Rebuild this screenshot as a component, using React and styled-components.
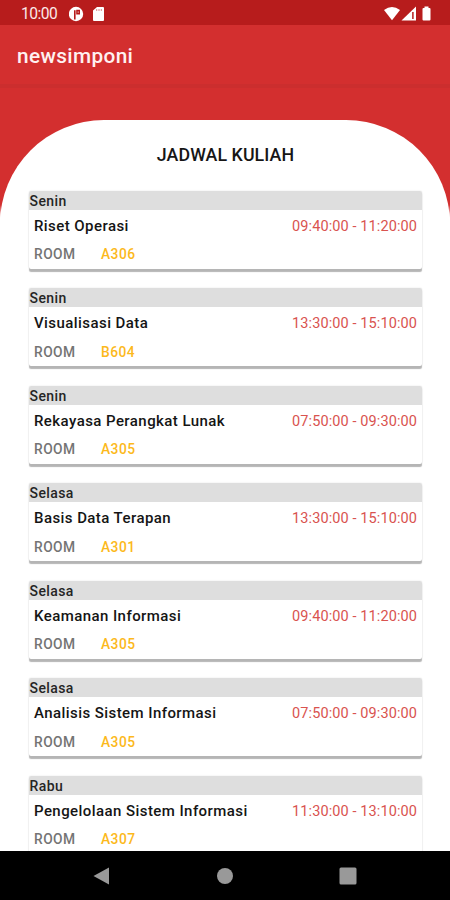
import React from "react";
import styled, { createGlobalStyle } from "styled-components";

const GlobalStyle = createGlobalStyle`
  * { box-sizing: border-box; }
  body { margin: 0; background: #fff; }
`;

const Screen = styled.div`
  width: 450px;
  height: 900px;
  display: flex;
  flex-direction: column;
  overflow: hidden;
  font-family: Roboto, sans-serif;
  font-weight: 500;
  background: #fff;
`;

const StatusBar = styled.header`
  flex: none;
  height: 25px;
  display: flex;
  align-items: center;
  padding: 2px 18px 0 21px;
  color: #fbe9e9;
  background: #b71c1c;
`;

const Clock = styled.span`
  width: 48px;
  padding-top: 1px;
  font-size: 15.6px;
  font-weight: 400;
  line-height: 23px;
  letter-spacing: -0.5px;
  white-space: nowrap;
`;

const StatusIcons = styled.svg`
  display: block;
  flex: none;
  margin-left: ${(p) => (p.$end ? "auto" : 0)};
`;

const AppBar = styled.div`
  flex: none;
  height: 63px;
  padding: 0 17px;
  display: flex;
  align-items: center;
  color: #fff1f1;
  background: #d32f2f;
  border-bottom: 4px solid #cb2e2e;
`;

const AppTitle = styled.h1`
  margin: 2px 0 0;
  font-size: 20.8px;
  font-weight: 500;
  line-height: 26px;
  letter-spacing: 0.36px;
`;

const Content = styled.main`
  flex: 1;
  min-height: 0;
  padding-top: 32px;
  overflow: hidden;
  background: linear-gradient(#d32f2f 117px, #fff 130px);
`;

const Sheet = styled.section`
  height: 100%;
  padding: 24px 28px 0 29px;
  background: #fff;
  border-radius: 104px 104px 0 0;
`;

const Heading = styled.h2`
  margin: 0 0 25.5px;
  font-size: 17.8px;
  font-weight: 500;
  line-height: 21px;
  letter-spacing: 0.08px;
  text-align: center;
  color: #161616;
`;

const ScheduleList = styled.div`
  display: flex;
  flex-direction: column;
  gap: 19.5px;
`;

const Card = styled.article`
  flex: none;
  height: 78px;
  border-radius: 2px;
  background: #fff;
  box-shadow: 0 2.5px 1px #b5b5b5, 0 0 1.5px #d8d8d8;
`;

const Day = styled.div`
  height: 19px;
  padding-left: 0.5px;
  font-size: 14px;
  line-height: 21px;
  letter-spacing: 0.4px;
  color: #252525;
  background: #dedede;
  border-radius: 2px 2px 0 0;
`;

const CourseRow = styled.div`
  display: flex;
  justify-content: space-between;
  padding: 5.4px 5px 0;
  font-size: 15px;
  line-height: 22px;
  white-space: nowrap;
`;

const Course = styled.span`
  color: #151515;
  letter-spacing: 0.43px;
`;

const Time = styled.time`
  padding-top: 1px;
  margin-bottom: -1px;
  font-size: 14.5px;
  font-weight: 400;
  letter-spacing: 0.1px;
  color: #d9534f;
`;

const RoomRow = styled.div`
  display: flex;
  padding: 7.6px 5px 0;
  font-size: 13.8px;
  line-height: 20px;
  letter-spacing: 0.45px;
`;

const RoomLabel = styled.span`
  width: 67px;
  color: #747474;
`;

const RoomCode = styled.span`
  color: #fcb91c;
`;

const NavigationBar = styled.nav`
  flex: none;
  height: 49px;
  display: flex;
  justify-content: space-between;
  align-items: center;
  padding: 0 93px;
  background: #000;
`;

const NavButton = styled.button`
  width: 18px;
  height: 18px;
  padding: 0;
  border: 0;
  background: transparent;
  color: #999;
  svg { display: block; }
`;

const classes = [
  ["Senin", "Riset Operasi", "09:40:00 - 11:20:00", "A306"],
  ["Senin", "Visualisasi Data", "13:30:00 - 15:10:00", "B604"],
  ["Senin", "Rekayasa Perangkat Lunak", "07:50:00 - 09:30:00", "A305"],
  ["Selasa", "Basis Data Terapan", "13:30:00 - 15:10:00", "A301"],
  ["Selasa", "Keamanan Informasi", "09:40:00 - 11:20:00", "A305"],
  ["Selasa", "Analisis Sistem Informasi", "07:50:00 - 09:30:00", "A305"],
  ["Rabu", "Pengelolaan Sistem Informasi", "11:30:00 - 13:10:00", "A307"],
];

export default function App() {
  return (
    <Screen>
      <GlobalStyle />
      <StatusBar>
        <Clock>10:00</Clock>
        <StatusIcons width="38" height="18" viewBox="0 0 38 18" fill="#fff">
          <circle cx="7" cy="9" r="7.2" />
          <path d="M5.8 14.5V5.2M8 5.5h2.2v3.2H8z" fill="none" stroke="#b71c1c" strokeWidth="1.6" />
          <path d="M28 2h6q1 0 1 1v12q0 1-1 1h-9q-1 0-1-1V5.5z" />
          <path d="M27.7 4v2M30 4v2M32.3 4v2" stroke="#d98989" strokeWidth="1" />
        </StatusIcons>
        <StatusIcons $end width="48" height="18" viewBox="0 0 48 18" fill="#fff">
          <path d="M0 5Q8 -1 16 5L8 15.2Z" />
          <path d="M17.5 15.5 32 1.5v14z" />
          <path d="M28.9 7v7" stroke="#b71c1c" strokeWidth="1.5" />
          <path d="M40.5 1.5h4v1.5h1q1 0 1 1v10.5q0 1-1 1h-6q-1 0-1-1V4q0-1 1-1h1z" />
        </StatusIcons>
      </StatusBar>
      <AppBar><AppTitle>newsimponi</AppTitle></AppBar>
      <Content>
        <Sheet>
          <Heading>JADWAL KULIAH</Heading>
          <ScheduleList>
            {classes.map(([day, course, time, room]) => (
              <Card key={course}>
                <Day>{day}</Day>
                <CourseRow>
                  <Course>{course}</Course>
                  <Time>{time}</Time>
                </CourseRow>
                <RoomRow>
                  <RoomLabel>ROOM</RoomLabel>
                  <RoomCode>{room}</RoomCode>
                </RoomRow>
              </Card>
            ))}
          </ScheduleList>
        </Sheet>
      </Content>
      <NavigationBar>
        <NavButton aria-label="Back">
          <svg width="18" height="18" fill="currentColor"><path d="M.5 9 16 .5v17z" /></svg>
        </NavButton>
        <NavButton aria-label="Home">
          <svg width="18" height="18" fill="currentColor"><circle cx="9" cy="9" r="8" /></svg>
        </NavButton>
        <NavButton aria-label="Recents">
          <svg width="18" height="18" fill="currentColor"><rect x=".5" y=".5" width="17" height="17" rx="1.5" /></svg>
        </NavButton>
      </NavigationBar>
    </Screen>
  );
}
